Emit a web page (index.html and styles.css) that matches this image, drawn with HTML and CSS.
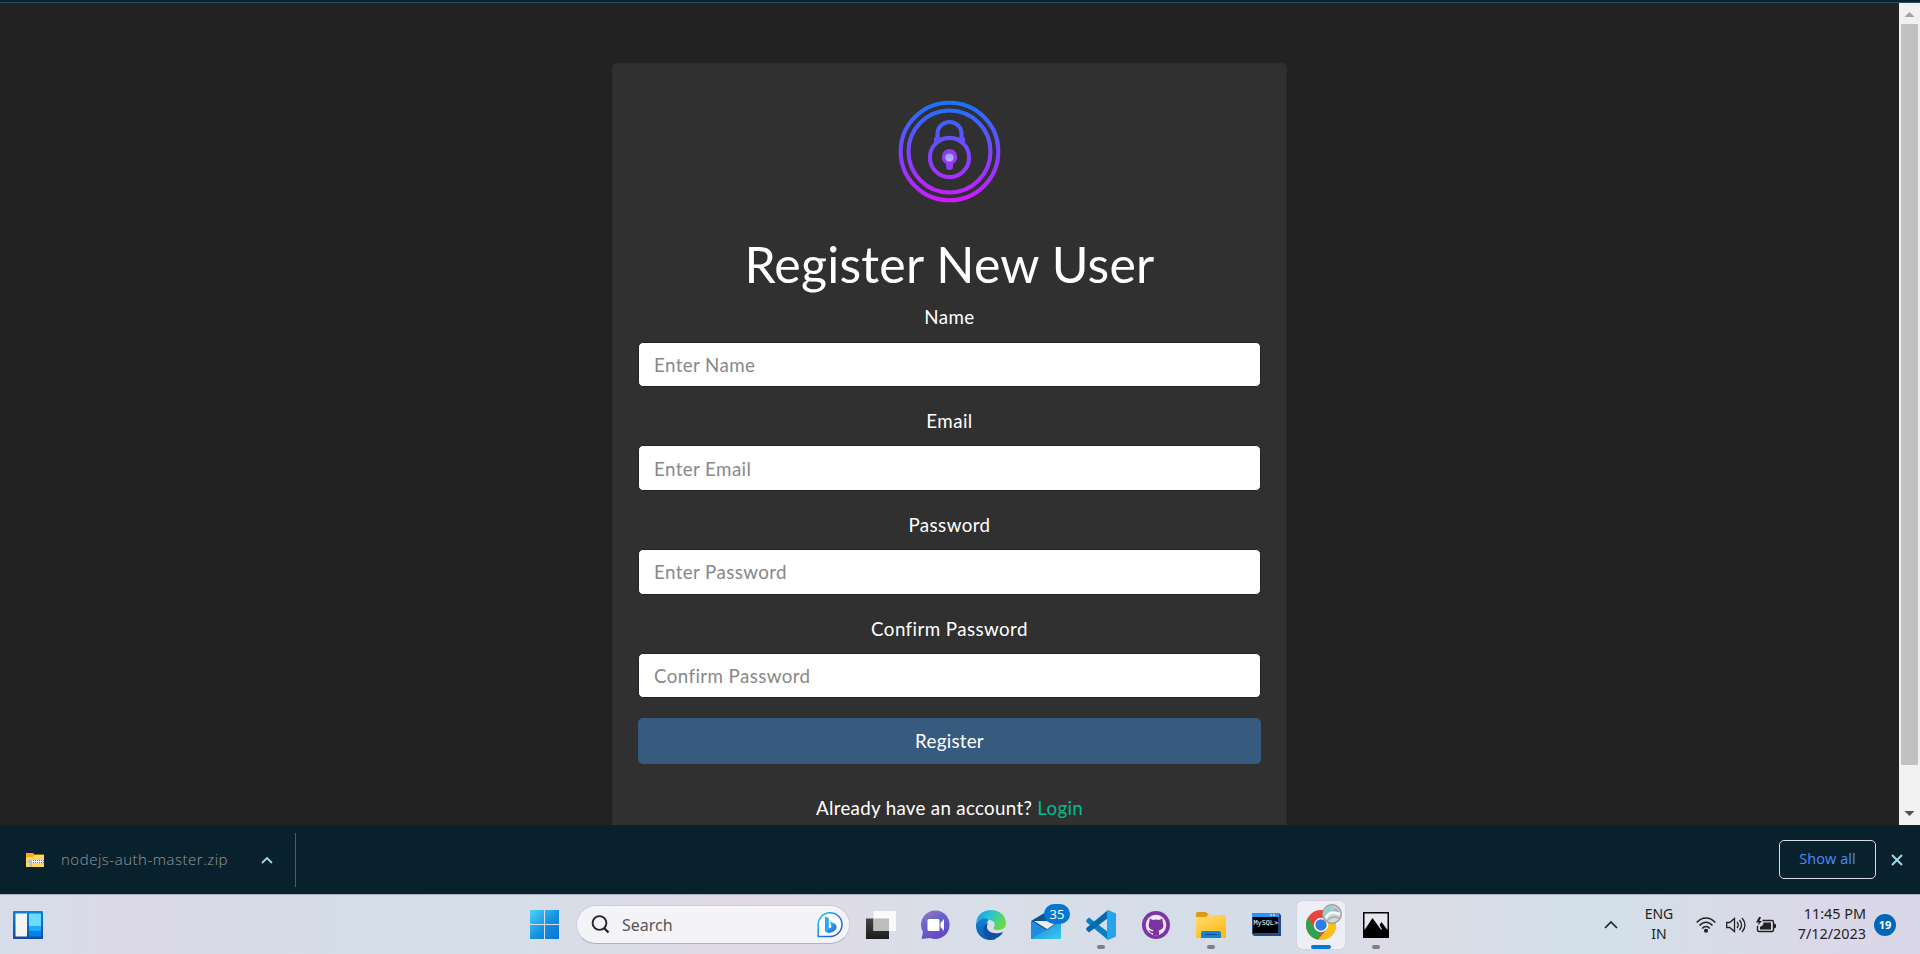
FILE: index.html
```html
<!DOCTYPE html>
<html lang="en">
<head>
<meta charset="utf-8">
<title>Register New User</title>
<link rel="stylesheet" href="styles.css">
</head>
<body>
<div class="browser-edge"></div>
<div class="viewport">
  <main class="page">
    <section class="card">
      <svg class="logo" viewBox="-62.5 -62.5 125 125" fill="none">
        <defs>
          <linearGradient id="lg" gradientUnits="userSpaceOnUse" x1="0" y1="-51" x2="0" y2="51"><stop offset="0" stop-color="#1476ff"/><stop offset=".45" stop-color="#704aff"/><stop offset="1" stop-color="#d318ff"/></linearGradient>
          <linearGradient id="kh" x1="0" y1="0" x2="0" y2="1"><stop offset="0" stop-color="#88a8ff"/><stop offset="1" stop-color="#ccaaff"/></linearGradient>
        </defs>
        <g stroke="url(#lg)" stroke-width="4.1">
          <circle r="48.800"/><circle r="41"/>
          <path d="M-12-12V-18a12 11.5 0 0 1 24 0V-12"/>
          <circle cy="6" r="19.6"/>
        </g>
        <path d="M-15.5-8V-14H-9V-12L-15.5-7ZM15.5-8V-14H9V-12L15.5-7Z" fill="#634dff"/>
        <path d="M0-2.5a8 8 0 0 0-3.5 15V15a3.500 3.500 0 0 0 7 0v-2.500A8 8 0 0 0 0-2.500Z" fill="#923bf5"/>
        <circle cy="6" r="4.1" fill="url(#kh)"/>
      </svg>
      <h1>Register New User</h1>
      <form class="form">
        <div class="group"><label for="n">Name</label><input id="n" type="text" placeholder="Enter Name"></div>
        <div class="group"><label for="e">Email</label><input id="e" type="email" placeholder="Enter Email"></div>
        <div class="group"><label for="p">Password</label><input id="p" type="password" placeholder="Enter Password"></div>
        <div class="group"><label for="c">Confirm Password</label><input id="c" type="password" placeholder="Confirm Password"></div>
        <button class="submit" type="button">Register</button>
      </form>
      <p class="login">Already have an account? <a>Login</a></p>
    </section>
  </main>
  <div class="scrollbar">
    <svg class="arrow" viewBox="0 0 21 21"><path d="M5.500 14 10.500 9l5 5Z" fill="#a3a3a3"/></svg>
    <div class="thumb"></div>
    <svg class="arrow" viewBox="0 0 21 21"><path d="M5.500 10 10.500 15l5-5Z" fill="#505050"/></svg>
  </div>
</div>

<div class="downloads">
  <svg class="zip" viewBox="0 0 18 14"><path d="M0 0h7l1.500 1.500H18V14H0Z" fill="#f5ad16"/><path d="M0 4h7l2-2h9v12H0Z" fill="#ffd55e"/><path d="M2 8.500h16" stroke="#f5f5f5" stroke-width="3"/><path d="M3 7.500h15M3 9.500h15" stroke="#777" stroke-dasharray="1 1"/><path d="M2 7h4v7H3.500v-4H2Z" fill="#bbb"/></svg>
  <span class="file">nodejs-auth-master.zip</span>
  <svg class="up" viewBox="0 0 12 8"><path d="m1 7 5-5 5 5" fill="none" stroke="#9ed9e8" stroke-width="1.800"/></svg>
  <span class="divider"></span>
  <span class="show-all">Show all</span>
  <svg class="close" viewBox="0 0 12 12"><path d="m1 1 10 10M11 1 1 11" stroke="#9ed9e8" stroke-width="2"/></svg>
</div>

<footer class="taskbar">
  <svg class="widgets" viewBox="0 0 30 28"><defs><linearGradient id="wd" x2="0" y2="1"><stop stop-color="#0a84dd"/><stop offset="1" stop-color="#15489a"/></linearGradient></defs><rect width="30" height="28" rx="1" fill="url(#wd)"/><path d="M2.500 2.500H14V25.500H2.500Z" fill="#f5f5f5"/><path d="M16 2.500h12V15H16Z" fill="#69dcff"/><path d="M16 15h12v5H16Z" fill="#22a7ff"/><path d="M16 20h12v5.500H16Z" fill="#0085f0"/></svg>

  <div class="apps">
    <svg class="start" viewBox="0 0 29 29"><defs><linearGradient id="ws" gradientUnits="userSpaceOnUse" x2="29" y2="29"><stop stop-color="#4fd2ff"/><stop offset=".55" stop-color="#1491df"/><stop offset="1" stop-color="#0873d0"/></linearGradient></defs><path d="M0 0h14v14H0ZM15 0h14v14H15ZM0 15h14v14H0ZM15 15h14v14H15Z" fill="url(#ws)"/></svg>
    <div class="search">
      <svg class="glass" viewBox="0 0 19 19"><circle cx="8.500" cy="8" r="6.900" fill="none" stroke="#222" stroke-width="1.900"/><path d="m13 13 4.500 4.500" stroke="#222" stroke-width="2.300"/></svg>
      <span>Search</span>
      <svg class="bing" viewBox="0 0 26 26"><defs><linearGradient id="bg" x2="1" y2="1"><stop stop-color="#20c5ff"/><stop offset=".6" stop-color="#1b74e6"/><stop offset="1" stop-color="#2050b4"/></linearGradient><linearGradient id="bb" x2="1" y2="1"><stop stop-color="#38caff"/><stop offset="1" stop-color="#1763e6"/></linearGradient></defs><path d="M1.200 24.500V13A11.900 11.900 0 1 1 13 24.500Z" fill="#fff" stroke="url(#bg)" stroke-width="1.500"/><path d="M10 6.500V17" fill="none" stroke="url(#bg)" stroke-width=".1"/><path d="M8 4.500 11.800 6v11.300L8 19.500Z" fill="#2ba9f5"/><path d="m13 9.500 4.500 2q2.500 1.500 2 4.500-.8 2.500-3 3.500-3.500 2-6 1.200L8 19l6.500-4Z" fill="url(#bb)"/></svg>
    </div>
    <div class="tile"><svg viewBox="0 0 30 30"><defs><linearGradient id="tk" x2="0" y2="1"><stop stop-color="#444"/><stop offset="1" stop-color="#1c1c1c"/></linearGradient></defs><path d="M0 8.500h23V29H0Z" fill="url(#tk)"/><path d="M7.500 1H30v20H7.500Z" fill="#fafafa"/><path d="M7.500 8.500H23V21H7.500Z" fill="#bcbdbe"/></svg></div>
    <div class="tile"><svg viewBox="0 0 30 30"><defs><linearGradient id="ct" x2=".6" y2="1"><stop stop-color="#a57bb7"/><stop offset=".45" stop-color="#6765cd"/><stop offset="1" stop-color="#6548c4"/></linearGradient></defs><path d="M.5 29 2 22A14.300 14.300 0 1 1 9 28Z" fill="url(#ct)"/><rect x="6.500" y="9" width="12" height="12" rx="1.500" fill="#fff"/><path d="m19.500 13 3.500-4v12l-3.500-4Z" fill="#fff"/></svg></div>
    <div class="tile"><svg viewBox="0 0 30 30"><defs><linearGradient id="eg" x1="0" x2="1" y2=".4"><stop stop-color="#1696d9"/><stop offset=".5" stop-color="#2bc4d4"/><stop offset="1" stop-color="#68db48"/></linearGradient><linearGradient id="eb" x2="0" y2="1"><stop stop-color="#1483d8"/><stop offset="1" stop-color="#0b5cac"/></linearGradient></defs><path d="M0 13C1 5 7 0 15 0c9 0 15 6 15 13 0 5-4 7-8 7-5 0-5-2-4-3 2-3 0-6-4-7C8 8 2 9 0 13Z" fill="url(#eg)"/><path d="M0 14c2-5 9-7 13-4-4 2-4 13 5 16l2 3C9 33-1 25 0 14Z" fill="url(#eb)"/><path d="M12 13c-4 7 4 13 15 9-3 6-10 8-14 7C5 25 6 15 12 13Z" fill="#10519f"/></svg></div>
    <div class="tile"><svg viewBox="0 0 30 30"><defs><linearGradient id="ml" x2="1" y2="1"><stop stop-color="#1683d3"/><stop offset="1" stop-color="#3cc9f2"/></linearGradient></defs><path d="M0 11 15 2l15 9-14 10Z" fill="#0c5298"/><path d="M3 11h25l-12 8Z" fill="#eee"/><path d="M0 11 30 29H0Z" fill="#1c8edd"/><path d="M30 11v18H0Z" fill="url(#ml)"/></svg><b class="count">35</b></div>
    <div class="tile"><svg viewBox="0 0 30 30"><path d="M.3 10 3 7.500 22 22v8L.3 12Z" fill="#087fc5"/><path d="M.3 20 3 22.500 22 8V0L.3 18Z" fill="#0768ae"/><path d="M22 0 30 3.500v23L22 30l-1-1V1Z" fill="#25a3eb"/></svg><i class="dot"></i></div>
    <div class="tile"><svg viewBox="0 0 30 30"><circle cx="15" cy="15" r="14" fill="#7e35a5"/><circle cx="15" cy="15" r="10.300" fill="#f1e9f5"/><path d="M8.800 8.500 12 10a12 12 0 0 1 6 0l3.200-1.500.6 4c2 5-1 7.500-4.300 8 .8 1 .5 3 .5 4.500h-6v-2c-3 .5-3-2-4.500-2.800 2-.4 2.500 1.600 4.500 1l.5-1C9 19.500 6.500 17 8.200 12.500Z" fill="#7b349f"/></svg></div>
    <div class="tile"><svg viewBox="0 0 30 30"><defs><linearGradient id="fd" x2=".7" y2="1"><stop stop-color="#ffdf75"/><stop offset="1" stop-color="#ffb916"/></linearGradient></defs><path d="M0 3.500Q0 2 1.500 2H10l3 3-4 4H0Z" fill="#df9b10"/><path d="M0 7h9.500l3-2H30v23H0Z" fill="url(#fd)"/><path d="M5 28v-5q0-2 2-2h16q2 0 2 2v5Z" fill="#1482d2"/><path d="M9 24.500h12" stroke="#08519a"/></svg><i class="dot"></i></div>
    <div class="tile"><svg viewBox="0 0 30 30"><path d="M1 3h27l2 2v21H3l-2-2Z" fill="#244b88"/><path d="M1 3h27v4H1Z" fill="#2795f5"/><path d="M2 7h25v16H2Z" fill="#000"/><path d="M19 5h2m1 0h2" stroke="#b9dcff" stroke-width="1.500"/><path d="M25 5h2" stroke="#e45b62" stroke-width="1.500"/><text class="sql" x="2.500" y="15">MySQL&gt;</text></svg></div>
    <div class="tile active"><svg viewBox="0 0 30 30"><circle cx="15" cy="15" r="15" fill="#e8453c"/><path d="M2 7.500 9 19l6 4-3 6.700A15 15 0 0 1 2 7.500Z" fill="#2fa44f"/><path d="M15 8h13.300A15 15 0 0 1 12 29.700L21 19Z" fill="#fbc116"/><circle cx="15" cy="15" r="7.200" fill="#fff"/><circle cx="15" cy="15" r="5.700" fill="#2b7de9"/></svg>
      <svg class="profile" viewBox="0 0 20 20"><circle cx="10" cy="10" r="9.300" fill="#d3d8d6" stroke="#999" stroke-width="1.300"/><path d="M2 12C2 5 7 1 11 2L8 9Z" fill="#86d6c0"/><path d="M10 3q6 0 8 6l-5-1Z" fill="#9ec3dd"/><path d="M9 7c3-3 6-3 9 2l-6 1Z" fill="#c39fc0"/><path d="M4 14c3-7 7-6 14-4" fill="none" stroke="#fafafa" stroke-width="2.500"/><path d="M5 17c3-4 7-5 12-3" fill="none" stroke="#a5aaa8" stroke-width="1.500"/></svg><i class="line"></i></div>
    <div class="tile"><svg viewBox="0 0 30 30"><path d="M2 2h26v26H2Z" fill="#000"/><path d="M3.500 3.500h23V20l-6-8-2 3 3 5-2-1-8-11-8 12Z" fill="#e8e5ee"/></svg><i class="dot"></i></div>
  </div>

  <div class="tray">
    <svg class="chev" viewBox="0 0 14 8"><path d="m1 7 6-6 6 6" fill="none" stroke="#222" stroke-width="1.700"/></svg>
    <div class="lang">ENG<br>IN</div>
    <svg class="status" viewBox="0 0 20 16" fill="none" stroke="#222" stroke-width="1.500"><path d="M.7 5.500C6-.5 14-.5 19.300 5.500M3.500 8.500c4-4.500 9-4.500 13 0M6.200 11.500c2.300-2.600 5.300-2.600 7.600 0"/><circle cx="10" cy="13.800" r="1.300" fill="#222"/></svg>
    <svg class="status" viewBox="0 0 20 16" fill="none" stroke="#222" stroke-width="1.300"><path d="M.7 5.500h3L8.500 1.500v13L3.700 10.500h-3Z"/><path d="M11 5q2.500 3 0 6M13.500 3q4 5 0 10M16 1q6 7 0 14"/></svg>
    <svg class="status" viewBox="0 0 20 16"><path d="M6.500 3.500H16q1.500 0 1.500 1.500v8q0 1.500-1.500 1.500H3q-1.500 0-1.500-1.500V9" fill="none" stroke="#222" stroke-width="1.400"/><path d="M7.500 5.500H15v7H4V10l3-2ZM18 6.500l2 1v3l-2 1ZM3 0 0 5.500h3L1.500 9 6 4H3.500L5 0Z" fill="#222"/></svg>
    <div class="clock">11:45 PM<br>7/12/2023</div>
    <b class="notices">19</b>
  </div>
</footer>
</body>
</html>
```

FILE: styles.css
```css
* { box-sizing: border-box; }
body {
  margin: 0;
  width: 1920px;
  height: 954px;
  overflow: hidden;
  display: flex;
  flex-direction: column;
  background: #222;
  color: #fff;
  font-family: Lato, sans-serif;
  font-size: 18.75px;
  line-height: 1.5;
}
svg { display: block; flex: none; }
.browser-edge { flex: none; height: 3px; background: #09212d; border-bottom: 1px solid #2b4d5d; }
.viewport { flex: none; height: 822px; display: flex; overflow: hidden; }
.page { flex: 1; display: flex; justify-content: center; align-items: flex-start; padding-top: 60px; }
.card {
  width: 675px;
  height: 850px;
  padding: 25px;
  background: #303030;
  border: 1px solid #2d2d2d;
  border-radius: 5px;
  display: flex;
  flex-direction: column;
  text-align: center;
}
.logo { width: 125px; height: 125px; align-self: center; margin-bottom: 20px; }
h1 { margin: 0 0 9.400px; font-size: 50px; font-weight: 400; line-height: 60px; letter-spacing: .22px; }
.form { display: flex; flex-direction: column; }
.group { display: flex; flex-direction: column; margin-bottom: 20px; }
label { line-height: 28.125px; margin-bottom: 10px; letter-spacing: .42px; }
input {
  height: 45.625px;
  padding: 0 15px;
  border: 1px solid #222;
  border-radius: 5px;
  background: #fff;
  font: 18.75px Lato, sans-serif;
  letter-spacing: .4px;
}
input::placeholder { color: #888; opacity: 1; }
.submit {
  height: 45.625px;
  padding: 0 0 1px;
  border: 0;
  border-radius: 5px;
  background: #375a7f;
  color: #fff;
  font: 18.75px Lato, sans-serif;
  letter-spacing: .25px;
}
.login { margin: 29.500px 0 0; letter-spacing: .3px; }
.login a { color: #00bc8c; }
.scrollbar { width: 21px; background: #f1f1f1; display: flex; flex-direction: column; align-items: center; }
.arrow { width: 21px; height: 21px; }
.thumb { flex: none; width: 17px; height: 741px; background: #c1c1c1; margin-bottom: 36px; }

.downloads {
  flex: none;
  height: 69px;
  padding: 0 17px 0 26px;
  display: flex;
  align-items: center;
  background: #09212d;
  font-family: "Open Sans", sans-serif;
}
.zip { width: 18px; height: 14px; }
.file { width: 167px; margin-left: 17px; font-size: 15px; font-weight: 300; letter-spacing: .52px; white-space: nowrap; color: #92999c; }
.up { width: 12px; height: 8px; margin-left: 33px; }
.divider { width: 1px; height: 54px; margin-left: 22px; background: #42616e; }
.show-all {
  width: 97px;
  height: 39px;
  margin-left: auto;
  border: 1px solid #d5dce3;
  border-radius: 5px;
  color: #4a8cfa;
  font-size: 14.5px;
  line-height: 35px;
  text-align: center;
  letter-spacing: .1px;
}
.close { width: 12px; height: 12px; margin-left: 15px; }

.taskbar {
  flex: none;
  height: 60px;
  border-top: 1px solid #acb1ba;
  display: flex;
  align-items: center;
  padding-left: 13px;
  background: linear-gradient(90deg, #d6deea 0, #dcd8e7 7%, #d4dde8 18%, #d6dfe9 27%, #e0d8e5 39%, #d8dfe9 50%, #d4dce8 67%, #dcdbe7 72%, #d2e0e9 83%, #dad9e8 93%, #dad7e8 100%);
  color: #222;
  font-family: "Noto Sans", sans-serif;
}
.widgets { width: 30px; height: 28px; }
.apps { display: flex; align-items: center; gap: 7px; margin-left: 487px; }
.start { width: 29px; height: 29px; margin-right: 10px; }
.search {
  width: 274px;
  height: 39px;
  padding: 0 6px 0 14px;
  display: flex;
  align-items: center;
  border: 1px solid #cacddc;
  border-bottom-color: #b0b2bd;
  border-radius: 20px;
  background: #f4f4f8;
  color: #555;
  font-size: 16px;
}
.glass { width: 19px; height: 19px; margin-right: 12px; }
.bing { width: 26px; height: 26px; margin-left: auto; }
.tile { position: relative; width: 48px; height: 48px; display: flex; align-items: center; justify-content: center; border-radius: 5px; }
.tile > svg { width: 30px; height: 30px; }
.active { background: #eeeff5; box-shadow: 0 0 1px #aaa; }
.tile > .profile { position: absolute; width: 20px; height: 20px; top: 3px; right: 3px; }
.count {
  position: absolute;
  top: 3px;
  left: 22px;
  width: 26px;
  height: 20px;
  border-radius: 10px;
  background: #0677d1;
  color: #fff;
  font-size: 13px;
  font-weight: 400;
  line-height: 20px;
  text-align: center;
}
.dot, .line { position: absolute; bottom: 0; width: 8px; height: 4px; border-radius: 2px; background: #7c7f85; }
.line { width: 20px; background: #0878d4; }
.sql { font: 6.8px "DejaVu Sans Mono", monospace; fill: #fff; }
.tray { display: flex; align-items: center; margin-left: auto; padding-right: 24px; font-size: 14px; line-height: 20px; }
.chev { width: 14px; height: 8px; }
.lang { width: 40px; margin-left: 21px; margin-right: 17px; padding-bottom: 1px; text-align: center; }
.status { width: 20px; height: 16px; margin-right: 10px; }
.clock { width: 80px; padding-bottom: 2px; text-align: right; white-space: nowrap; font-size: 14.400px; }
.notices { width: 22px; height: 22px; margin-left: 8px; border-radius: 50%; background: #0067b8; color: #fff; font-size: 11px; line-height: 22px; text-align: center; }
```
